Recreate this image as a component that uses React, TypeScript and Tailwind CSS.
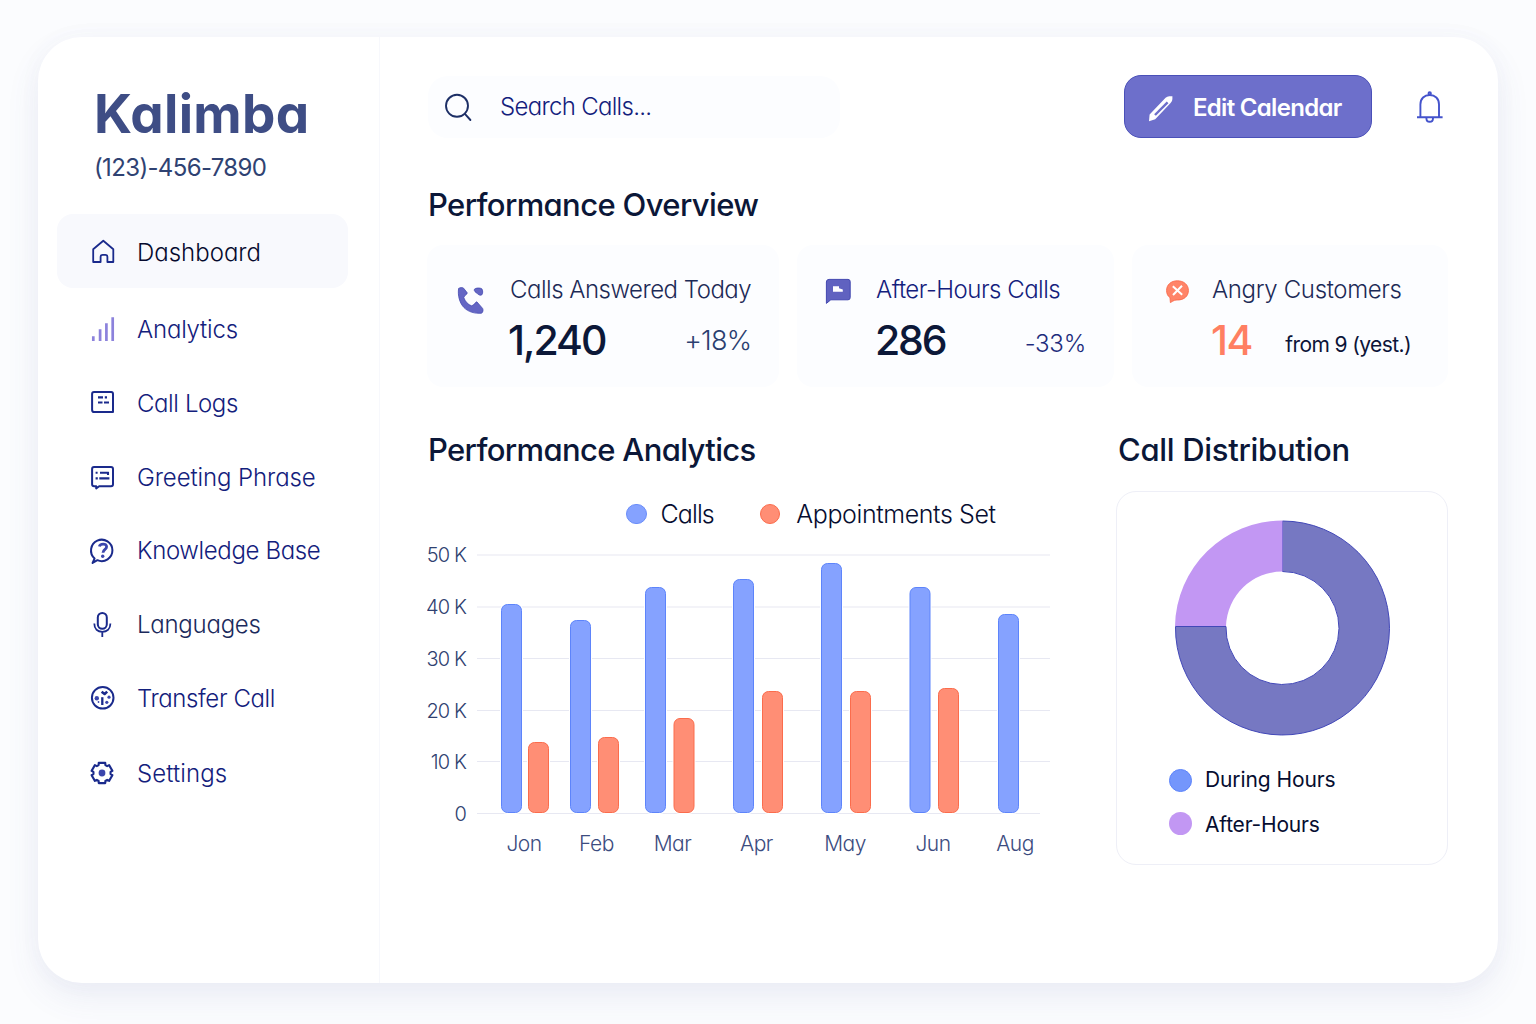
import React from "react";
import clsx from "clsx";

const navItems = [
  { label: "Dashboard", icon: "home", tracking: "tracking-[0px]", color: "pt-[3px] text-[#050a2e]" },
  { label: "Analytics", icon: "bars", tracking: "tracking-[-0.2px]", color: "pt-px text-[#13207c]" },
  { label: "Call Logs", icon: "logs", tracking: "tracking-[-0.4px]", color: "pt-px text-[#13207c]" },
  { label: "Greeting Phrase", icon: "greeting", tracking: "tracking-[-0.1px]", color: "pt-px text-[#13207c]" },
  { label: "Knowledge Base", icon: "help", tracking: "tracking-[-0.36px]", color: "text-[#13207c]" },
  { label: "Languages", icon: "mic", tracking: "tracking-[-0.25px]", color: "text-[#1b2a5c]" },
  { label: "Transfer Call", icon: "transfer", tracking: "tracking-[-0.4px]", color: "text-[#13207c]" },
  { label: "Settings", icon: "gear", tracking: "tracking-[0.1px]", color: "pt-px text-[#13207c]" },
];

const months = [
  { label: "Jon", x: 524.5, calls: [501, 604], appts: [528, 742] },
  { label: "Feb", x: 597, calls: [570, 620], appts: [598, 737] },
  { label: "Mar", x: 673, calls: [645, 587], appts: [673.5, 718] },
  { label: "Apr", x: 757, calls: [733, 579], appts: [762, 691] },
  { label: "May", x: 845.5, calls: [821, 563], appts: [850, 691] },
  { label: "Jun", x: 933.5, calls: [909.5, 587], appts: [938, 688] },
  { label: "Aug", x: 1015.5, calls: [998, 614], appts: null },
];

const gridLines = [
  { label: "50 K", y: 555 },
  { label: "40 K", y: 607 },
  { label: "30 K", y: 658.5 },
  { label: "20 K", y: 710.5 },
  { label: "10 K", y: 761.5 },
  { label: "0", y: 813.5 },
];

// six flat teeth around (14, 14)
const gearPoints = [0, 1, 2, 3, 4, 5]
  .flatMap((k) =>
    [
      [-23, 8.6],
      [-18, 10.6],
      [18, 10.6],
      [23, 8.6],
    ].map(([deg, r]) => {
      const a = ((k * 60 - 90 + deg) * Math.PI) / 180;
      return `${(14 + r * Math.cos(a)).toFixed(2)},${(14 + r * Math.sin(a)).toFixed(2)}`;
    })
  )
  .join(" ");

const NavIcon = ({ name }: { name: string }) => (
  <svg
    width="28"
    height="28"
    viewBox="0 0 28 28"
    fill="none"
    stroke="#1a2a8c"
    strokeWidth="2"
    strokeLinejoin="round"
    className="shrink-0"
  >
    {name === "home" && (
      <path d="M5.2 12.2 15.3 3.8 25.3 12.2V25H19.4V19.8Q19.4 17.8 17.4 17.8H14.6Q12.6 17.8 12.6 19.8V25H5.2Z" strokeWidth="1.8" />
    )}
    {name === "bars" && (
      <g stroke="#8c82dc" strokeWidth="2.7">
        <path d="M5.3 21.2V26M12.1 14.2V26M18.4 8.2V26M24.7 2.2V26" />
      </g>
    )}
    {name === "logs" && (
      <>
        <path d="M6 2.9H23.2Q25 2.9 25 4.9V23.1H6.2Q4.1 23.1 4.1 21V4.9Q4.1 2.9 6 2.9Z" />
        <path d="M10 8.4H15M16.8 8.4H19M10 13.5H14.5M16 13.5H21" strokeWidth="2.2" />
      </>
    )}
    {name === "greeting" && (
      <>
        <path d="M8.2 23.2H6.2Q4.1 23.2 4.1 21.2V6Q4.1 4 6 4H23Q25 4 25 6V21.2Q25 23.2 23 23.2H11.2L8.2 25.4Z" />
        <path d="M7.6 9.7H9.6M12 9.7H20.8M7.6 15.4H9.8M11.3 15.4H21.4M20 9V12" strokeWidth="2.1" />
      </>
    )}
    {name === "help" && (
      <>
        <path d="M6.6 21.4A10.7 10.7 0 1 1 9.4 23.2L4.6 25.9Z" />
        <path d="M11.4 9.6C12 6.3 18.6 6 18.6 9.8C18.6 12.6 15.1 12.2 15 15.8" stroke="#3b46ad" strokeWidth="2.8" />
        <circle cx="14.7" cy="19.3" r="1.7" fill="#3b46ad" stroke="none" />
      </>
    )}
    {name === "mic" && (
      <>
        <rect x="9.8" y="2" width="9" height="15.8" rx="4.5" />
        <path d="M6.3 12.6C6.3 18 9.8 20.8 14.3 20.8S22.4 18 22.4 12.6M14.3 20.8V26" strokeWidth="1.8" />
      </>
    )}
    {name === "transfer" && (
      <>
        <circle cx="14.7" cy="12.8" r="10.8" />
        <path d="M14.3 12.2V20" strokeWidth="2.3" />
        <path d="M13.6 6.8 16.6 9 19.2 6.6" strokeWidth="2.6" />
        <g fill="#3b46ad" stroke="none">
          <circle cx="8.8" cy="13.2" r="2.2" />
          <circle cx="21" cy="12.2" r="1.6" />
          <circle cx="18.8" cy="17.3" r="1.6" />
          <circle cx="10.5" cy="17" r="0.9" />
        </g>
      </>
    )}
    {name === "gear" && (
      <>
        <polygon points={gearPoints} strokeWidth="2.1" />
        <circle cx="14" cy="14" r="3.4" fill="#3b46ad" stroke="none" />
      </>
    )}
  </svg>
);

const Sidebar = () => (
  <aside className="w-[342px] shrink-0 border-r border-[#f7f8fc] pl-[19px]">
    <h1 className="mt-[44px] pl-[37px] text-[53px] leading-[66px] font-bold tracking-[0.3px] text-[#3e4d85]">Kalimba</h1>
    <p className="mt-[3px] pl-[37px] text-2xl leading-9 tracking-[-0.65px] text-[#2f4272]">(123)-456-7890</p>
    <nav className="mt-[28px] w-[291px]">
      {navItems.map((item, i) => (
        <a
          key={item.label}
          className={clsx(
            "flex h-[74px] items-center gap-[21px] rounded-2xl pl-[31px]",
            i === 0 && "mb-1 bg-[#f8f9fd]"
          )}
        >
          <NavIcon name={item.icon} />
          <span className={clsx("text-2xl font-light", item.tracking, item.color)}>{item.label}</span>
        </a>
      ))}
    </nav>
  </aside>
);

const Header = () => (
  <header className="mt-[38px] flex h-[63px] items-center">
    <div className="flex h-[62px] w-[412px] items-center rounded-[20px] bg-[#fcfdff] pl-[15px]">
      <svg width="30" height="30" viewBox="0 0 30 30" fill="none" stroke="#1d2f66" strokeWidth="1.9" strokeLinecap="round">
        <circle cx="14" cy="13.8" r="11" />
        <path d="M21.9 21.8 27.4 28" />
      </svg>
      <span className="ml-[27px] pt-px text-2xl font-light tracking-[-0.7px] text-[#13207c]">Search Calls...</span>
    </div>
    <button className="ml-auto flex h-[63px] w-[248px] items-center rounded-[17px] border border-[#4a50b8] bg-[#6d6fcb] pl-[22px]">
      <svg width="28" height="28" viewBox="0 0 28 28" className="mt-1">
        <path
          d="M2 26.2 2.6 19.5 18.6 2.8Q20.3 1.2 22.5 1.3H25.4V4Q25.4 6.4 23.6 8L8.2 24.2Z"
          fill="#fff"
        />
        <path d="M8 20 20.6 7.3" stroke="#6d6fcb" strokeWidth="2.4" />
      </svg>
      <span className="ml-[18px] pt-[3px] text-2xl font-semibold tracking-[-0.7px] text-white">Edit Calendar</span>
    </button>
    <svg width="28" height="34" viewBox="0 0 28 34" fill="none" stroke="#4453cc" strokeWidth="1.9" className="mr-[5px] ml-[43px]">
      <path d="M5.4 27V14.5C5.4 8.5 9.4 5 14.7 5S24 8.5 24 14.5V27" />
      <path d="M2 27.3H27.6M11.4 28.2C11.4 33 18 33 18 28.2" />
      <circle cx="14.7" cy="3.4" r="1.2" />
    </svg>
  </header>
);

const StatCards = () => (
  <section className="-ml-px mt-[20px] flex gap-[18px]">
    <div className="flex h-[142px] w-[352px] rounded-2xl bg-[#fcfdff] pt-[26px] pr-[29px] pl-[29px]">
      <svg width="30" height="30" viewBox="0 0 30 30" fill="#6466c4" stroke="#4247b0" strokeWidth="0.8" className="mt-[15px] shrink-0">
        <path d="M2.6 2.4C4.5 1.4 6.5 1.3 7.6 2.2L11.2 6.8C11.4 8.6 8.2 9.4 7.8 11.6C9 15.4 12.4 19 15.6 19.8C18.2 19.4 19.4 15.8 20.8 15.8L26.6 22.4C27.4 24 27 26.2 25.6 27.2C19 27.8 12.4 26 8 21.6C3.6 17 1.6 9.6 2.6 2.4Z" />
        <path d="M18.4 3.2C19.4 1.8 24.4 1.6 25.8 2.8C27 4.2 27 8 25.6 9C24 9.6 22.6 8.8 21.4 7.6C19.8 6.4 17.6 5 18.4 3.2Z" />
      </svg>
      <div className="ml-[24px] flex-1">
        <h3 className="pt-px text-2xl leading-9 font-light tracking-[-0.5px] whitespace-nowrap text-[#1c2a56]">Calls Answered Today</h3>
        <div className="mt-[8px] flex items-center justify-between">
          <span className="-ml-0.5 text-[41px] leading-[48px] font-medium tracking-[-2px] text-[#0c1838]">1,240</span>
          <span className="mt-0.5 text-[27px] font-light tracking-[-0.8px] text-[#2b3f70]">+18%</span>
        </div>
      </div>
    </div>
    <div className="flex h-[142px] w-[317px] rounded-2xl bg-[#fcfdff] pt-[26px] pr-[28px] pl-[27px]">
      <svg width="30" height="30" viewBox="0 0 30 30" className="mt-[5px] shrink-0">
        <path
          d="M5 3.4H24Q26.2 3.4 26.2 5.6V21.6Q26.2 23.8 24 23.8H6.8L2.4 27.4V6Q2.4 3.4 5 3.4Z"
          fill="#6062c0"
          stroke="#4247b0"
        />
        <path d="M9 10.2H15V12.2L18.8 13.6V15.8H9Z" fill="#fff" />
      </svg>
      <div className="ml-[22px] flex-1">
        <h3 className="pt-px text-2xl leading-9 font-light tracking-[-0.5px] whitespace-nowrap text-[#13207c]">After-Hours Calls</h3>
        <div className="mt-[8px] flex items-center justify-between">
          <span className="-ml-px text-[41px] leading-[48px] font-medium tracking-[-2.2px] text-[#0c1838]">286</span>
          <span className="mt-2 text-2xl font-light tracking-[-0.2px] text-[#1c2c7c]">-33%</span>
        </div>
      </div>
    </div>
    <div className="flex h-[142px] w-[316px] rounded-2xl bg-[#fcfdff] pt-[26px] pr-[37px] pl-[32px]">
      <svg width="28" height="30" viewBox="0 0 28 30" className="mt-[5px] shrink-0">
        <path
          d="M6.4 26.6 6 21.6C3.6 20 2.6 17.4 2.6 14.4C2.6 8.6 7.2 4.8 13.4 4.8S24.4 8.6 24.4 14.4C24.4 20.4 19.8 24 13.4 24C11.4 24 10.2 24 6.4 26.6Z"
          fill="#ff8468"
          stroke="#f9694a"
          strokeWidth="0.9"
        />
        <path d="M8.8 10.2 18.2 18.8M18 9.8 9 19" stroke="#fff" strokeWidth="2" />
      </svg>
      <div className="ml-[20px] flex-1">
        <h3 className="pt-px text-2xl leading-9 font-light tracking-[-0.35px] whitespace-nowrap text-[#1c2a56]">Angry Customers</h3>
        <div className="mt-[8px] flex items-center justify-between">
          <span className="-ml-px text-[41px] leading-[48px] font-medium tracking-[-1.5px] text-[#ff7f62]">14</span>
          <span className="mt-2.5 text-[21px] tracking-[-0.6px] text-[#0c1438]">from 9 (yest.)</span>
        </div>
      </div>
    </div>
  </section>
);

const BarChart = () => (
  <svg width="630" height="330" viewBox="427 540 630 330" className="-ml-px">
    {gridLines.map((g) => (
      <g key={g.label}>
        <path d={`M477 ${g.y}H${g.label === "0" ? 1040 : 1050}`} stroke="#e7e8f2" strokeWidth="1.2" />
        <text x="466" y={g.y + 7} textAnchor="end" className="fill-[#2f4170] text-xl font-light tracking-[-0.9px]">
          {g.label}
        </text>
      </g>
    ))}
    {months.map((m) => (
      <g key={m.label}>
        <rect x={m.calls[0] - 1} y={m.calls[1] - 1} width="23" height={815 - m.calls[1]} rx="7" fill="#fff" />
        <rect x={m.calls[0] + 0.5} y={m.calls[1] + 0.5} width="20" height={812 - m.calls[1]} rx="6" fill="#85a2ff" stroke="#5d84fb" />
        {m.appts && (
          <>
            <rect x={m.appts[0] - 1} y={m.appts[1] - 1} width="23" height={815 - m.appts[1]} rx="7" fill="#fff" />
            <rect x={m.appts[0] + 0.5} y={m.appts[1] + 0.5} width="20" height={812 - m.appts[1]} rx="6" fill="#ff8e75" stroke="#fb6c4c" />
          </>
        )}
        <text x={m.x - 0.5} y="851" textAnchor="middle" className="fill-[#3c4c80] text-[21px] font-light tracking-[-0.5px]">
          {m.label}
        </text>
      </g>
    ))}
  </svg>
);

const Donut = () => (
  <svg width="218" height="218" viewBox="-109.5 -109 218 218" className="mx-auto">
    <path d="M0-107A107 107 0 1 1-107-1.5H-56.5A56.5 56.5 0 1 0 0-56.5Z" fill="#7678c2" stroke="#4248b8" strokeWidth="1" />
    <path d="M0-107.5V-56.5A56.5 56.5 0 0 0-56.5-2H-107.5A107.5 107.5 0 0 1 0-107.5Z" fill="#c297f3" />
  </svg>
);

const App = () => {
  return (
    <div className="h-screen overflow-hidden bg-[#fbfcfe] pt-[37px] pl-[38px] font-[Inter,sans-serif] [font-feature-settings:'cv11']">
      <div className="flex h-[946px] w-[1460px] rounded-[44px] bg-white shadow-[0_14px_34px_rgba(80,88,150,0.09),0_0_24px_rgba(80,88,150,0.03)]">
        <Sidebar />
        <main className="w-[1068px] pl-[48px]">
          <Header />
          <h2 className="mt-[47px] text-[31px] leading-10 font-medium tracking-[-0.63px] text-[#0b1738]">Performance Overview</h2>
          <StatCards />
          <div className="mt-[43px] flex">
            <section className="w-[688px]">
              <h2 className="text-[31px] leading-10 font-medium tracking-[-0.65px] text-[#0b1738]">Performance Analytics</h2>
              <div className="mt-[24px] mb-[6px] flex h-10 items-center pl-[198px] text-[25px] font-light text-[#060d30]">
                <span className="size-[20.5px] rounded-full border border-[#6a8dfa] bg-[#85a2ff]" />
                <span className="ml-[14px] pt-0.5 tracking-[-0.9px]">Calls</span>
                <span className="ml-[46px] size-[20.5px] rounded-full border border-[#fb6c4c] bg-[#ff8e75]" />
                <span className="ml-[16px] pt-0.5 tracking-[-0.4px]">Appointments Set</span>
              </div>
              <BarChart />
            </section>
            <section className="w-[332px]">
              <h2 className="pl-[2px] text-[31px] leading-10 font-medium tracking-[-0.3px] text-[#0b1738]">Call Distribution</h2>
              <div className="mt-[21px] h-[374px] rounded-[20px] border border-[#eeeff7] pt-[27px]">
                <Donut />
                <div className="mt-[27px] flex flex-col gap-[11px] pl-[52px] text-[21px] leading-8 text-[#060d30]">
                  <div className="flex h-8 items-center gap-[13px]">
                    <span className="size-[23px] rounded-full border border-[#5d84fb] bg-[#7496fc]" />
                    <span className="tracking-[-0.1px]">During Hours</span>
                  </div>
                  <div className="flex h-8 items-center gap-[13px]">
                    <span className="size-[23px] rounded-full bg-[#c297f3]" />
                    <span className="pt-[3px] tracking-[-0.2px]">After-Hours</span>
                  </div>
                </div>
              </div>
            </section>
          </div>
        </main>
      </div>
    </div>
  );
};

export default App;
